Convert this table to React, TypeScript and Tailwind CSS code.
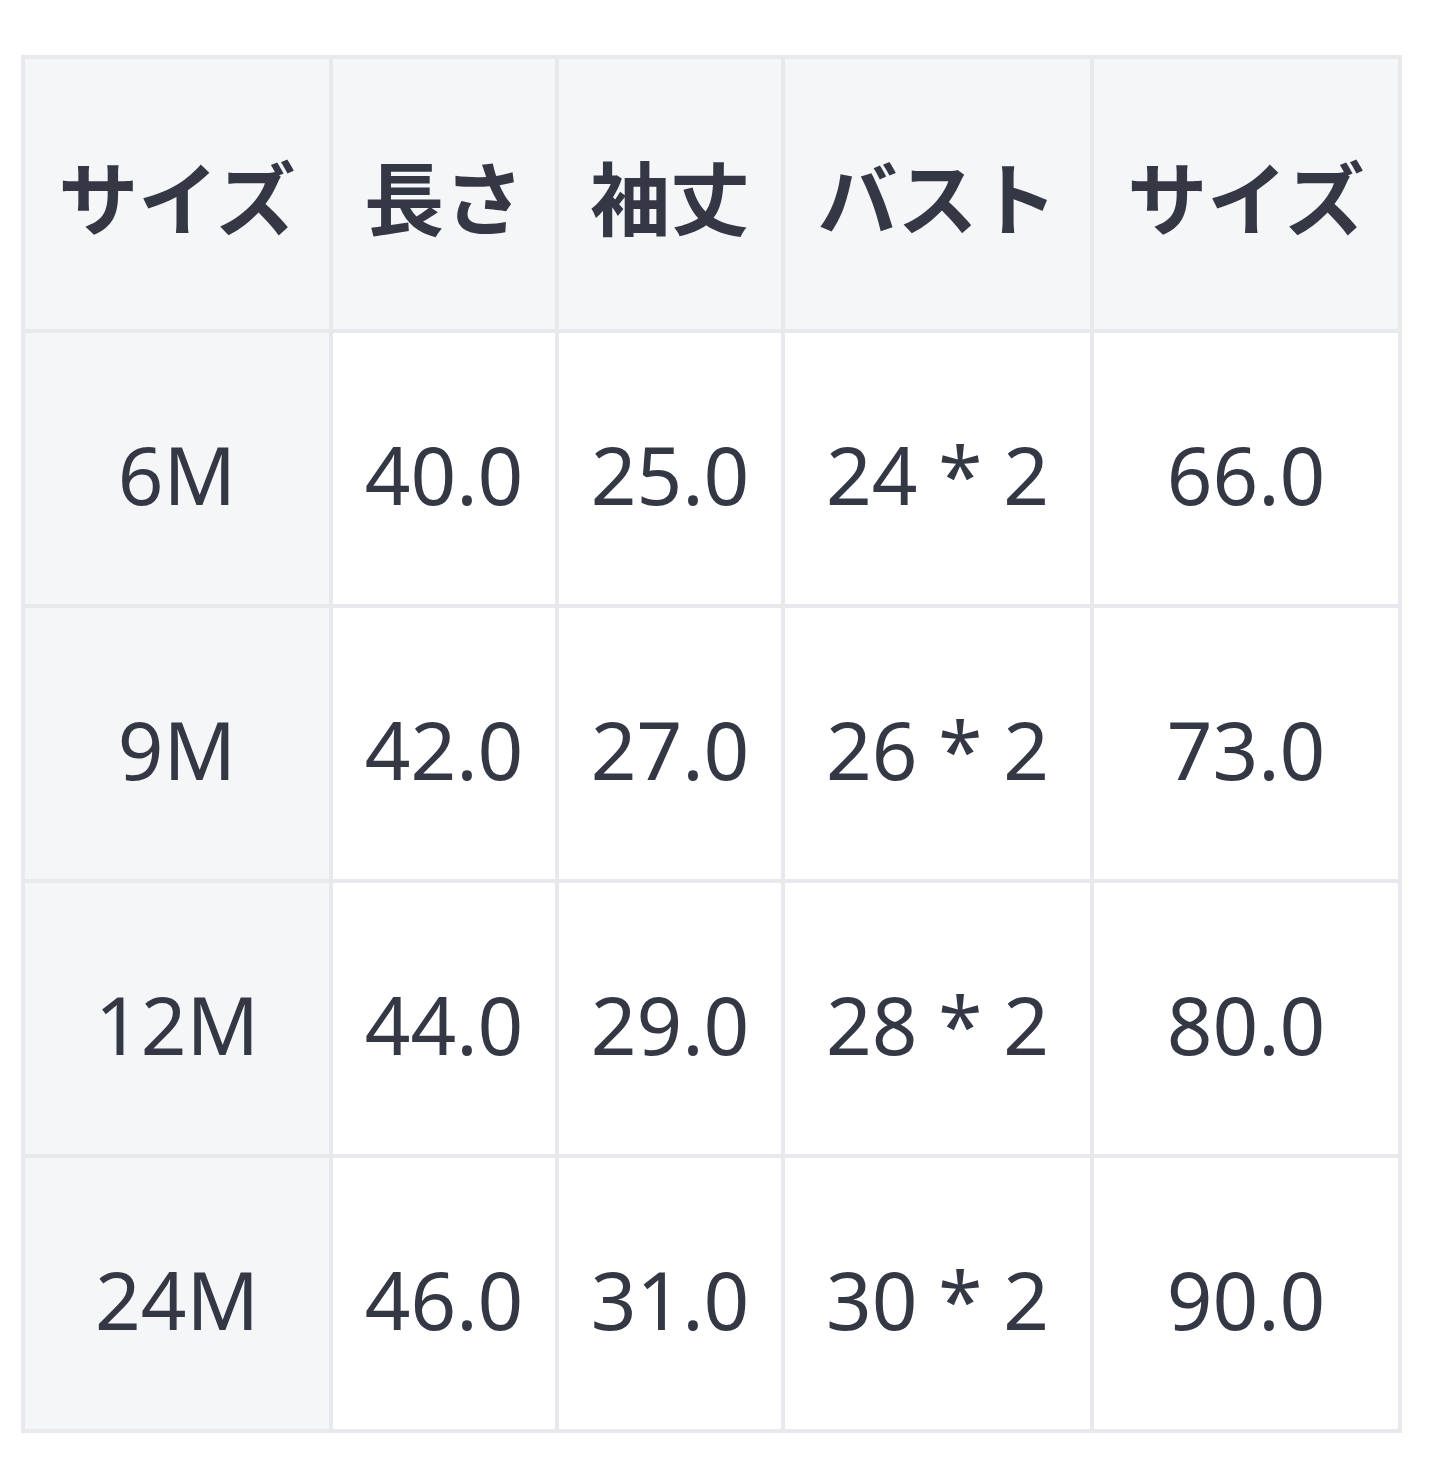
import React from "react";

const headers = ["サイズ", "長さ", "袖丈", "バスト", "サイズ"];
const rows = [
  ["6M", "40.0", "25.0", "24 * 2", "66.0"],
  ["9M", "42.0", "27.0", "26 * 2", "73.0"],
  ["12M", "44.0", "29.0", "28 * 2", "80.0"],
  ["24M", "46.0", "31.0", "30 * 2", "90.0"],
];

export default function App() {
  return (
    <div className="min-h-screen bg-white pl-[21px] pt-[55px]">
      <table
        className="table-fixed border-collapse w-[1381px] text-[#343844]"
        style={{ fontFamily: '"Noto Sans", "Noto Sans CJK JP", sans-serif' }}
      >
        <colgroup>
          <col className="w-[308px]" />
          <col className="w-[226px]" />
          <col className="w-[226px]" />
          <col className="w-[309px]" />
          <col className="w-[308px]" />
        </colgroup>
        <thead>
          <tr className="h-[274px]">
            {headers.map((h, i) => (
              <th
                key={i}
                className="border-4 border-[#e8e9ec] bg-[#f5f6f8] text-center align-middle p-0 text-[80px] font-bold leading-none"
                style={{ fontFamily: '"Noto Sans CJK JP", sans-serif' }}
              >
                {h}
              </th>
            ))}
          </tr>
        </thead>
        <tbody>
          {rows.map((r, ri) => (
            <tr key={ri} className="h-[275px]">
              {r.map((c, ci) => (
                <td
                  key={ci}
                  className={
                    ci === 0
                      ? "border-4 border-[#e8e9ec] bg-[#f5f6f8] text-center align-middle p-0 pt-[10px] text-[80px] leading-none"
                      : "border-4 border-[#e8e9ec] bg-white text-center align-middle p-0 pt-[10px] text-[80px] leading-none"
                  }
                >
                  {c}
                </td>
              ))}
            </tr>
          ))}
        </tbody>
      </table>
    </div>
  );
}
